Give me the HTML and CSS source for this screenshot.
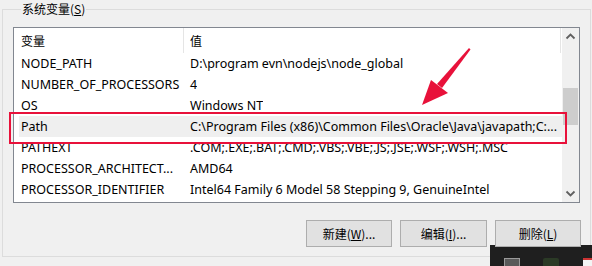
FILE: index.html
```html
<!DOCTYPE html>
<html>
<head>
<meta charset="utf-8">
<link rel="stylesheet" href="styles.css">
</head>
<body>
<fieldset class="group">
  <legend class="legend">系统变量(<u>S</u>)</legend>
  <div class="list">
    <div class="table">
      <div class="head">
        <div class="c1">变量</div>
        <div class="c2">值</div>
      </div>
      <div class="row"><div class="c1">NODE_PATH</div><div class="c2">D:\program evn\nodejs\node_global</div></div>
      <div class="row"><div class="c1">NUMBER_OF_PROCESSORS</div><div class="c2">4</div></div>
      <div class="row"><div class="c1">OS</div><div class="c2">Windows NT</div></div>
      <div class="row sel"><div class="c1">Path</div><div class="c2">C:\Program Files (x86)\Common Files\Oracle\Java\javapath;C:...</div></div>
      <div class="row"><div class="c1">PATHEXT</div><div class="c2">.COM;.EXE;.BAT;.CMD;.VBS;.VBE;.JS;.JSE;.WSF;.WSH;.MSC</div></div>
      <div class="row"><div class="c1">PROCESSOR_ARCHITECT...</div><div class="c2">AMD64</div></div>
      <div class="row"><div class="c1">PROCESSOR_IDENTIFIER</div><div class="c2">Intel64 Family 6 Model 58 Stepping 9, GenuineIntel</div></div>
    </div>
    <div class="scroll">
      <svg class="arr" width="17" height="17" viewBox="0 0 17 17"><path d="M4.5 10.5 L8.5 6.5 L12.5 10.5" fill="none" stroke="#606060" stroke-width="1.8"/></svg>
      <div class="track"><div class="thumb"></div></div>
      <svg class="arr" width="17" height="17" viewBox="0 0 17 17"><path d="M4.5 6.5 L8.5 10.5 L12.5 6.5" fill="none" stroke="#606060" stroke-width="1.8"/></svg>
    </div>
    <div class="mark"></div>
  </div>
  <div class="buttons">
    <button class="btn">新建(<u>W</u>)...</button>
    <button class="btn b2">编辑(<u>I</u>)...</button>
    <button class="btn">删除(<u>L</u>)</button>
  </div>
</fieldset>
<svg class="arrow" width="70" height="70" viewBox="0 0 70 70">
  <path d="M54 4 L55.5 5.5 L27 44 L22 40 Z" fill="#e8113a"/>
  <path d="M7 61 L16 36 L33 49 Z" fill="#e8113a"/>
</svg>
<div class="taskbar">
  <div class="ti t1"></div>
  <div class="ti t2"></div>
  <div class="ti t3"></div>
</div>
</body>
</html>
```
FILE: styles.css
```css
html, body {
  margin: 0;
  padding: 0;
}
body {
  width: 592px;
  height: 266px;
  overflow: hidden;
  background: #f0f0f0;
  font-family: "Noto Sans", "Noto Sans CJK SC", sans-serif;
  font-size: 12.5px;
  color: #000;
  position: relative;
}
.group {
  margin: 0 0 0 2px;
  width: 568px;
  height: 246px;
  border: 1px solid #dcdcdc;
  padding: 9px 9px 0 10px;
}
.legend {
  padding: 0 1px;
  margin-left: 8px;
  line-height: 18px;
  height: 18px;
  font-size: 12px;
  font-family: "Noto Sans CJK SC", sans-serif;
}
u { text-decoration: underline; text-underline-offset: 1px; }
.list {
  position: relative;
  display: flex;
  width: 565px;
  height: 174px;
  border: 1px solid #828790;
  background: #fff;
}
.table {
  flex: 1;
  display: flex;
  flex-direction: column;
}
.head {
  display: flex;
  height: 25px;
  align-items: center;
  border-right: 1px solid #e5e5e5;
  margin-right: 1px;
}
.head .c1 { border-right: 1px solid #e5e5e5; height: 25px; line-height: 25px; font-size: 12px; font-family: "Noto Sans CJK SC", sans-serif; }
.head .c2 { font-size: 12px; font-family: "Noto Sans CJK SC", sans-serif; }
.row {
  display: flex;
  height: 21px;
  line-height: 21px;
  white-space: nowrap;
}
.c1 {
  width: 162px;
  padding-left: 7px;
  flex: none;
}
.c2 {
  padding-left: 6px;
  white-space: nowrap;
  overflow: hidden;
}
.row .c2 { padding-left: 7px; }
.sel {
  background: #efefef;
  margin-left: 5px;
}
.sel .c1 { padding-left: 2px; }
.scroll {
  width: 17px;
  flex: none;
  background: #f0f0f0;
  display: flex;
  flex-direction: column;
}
.arr { display: block; flex: none; }
.track { flex: 1; padding: 43px 1px 0 1px; }
.thumb { height: 37px; background: #cdcdcd; }
.mark {
  position: absolute;
  left: -5px;
  top: 84px;
  width: 554px;
  height: 28px;
  border: 2px solid #e8113a;
}
.buttons {
  display: flex;
  justify-content: flex-end;
  gap: 8px;
  margin-top: 17px;
  position: relative;
  z-index: 2;
}
.btn {
  width: 86px;
  height: 27px;
  background: #e1e1e1;
  border: 1px solid #adadad;
  font-family: "Noto Sans CJK SC", sans-serif;
  font-size: 12px;
  padding: 0;
  color: #000;
}
.b2 { width: 87px; }
.arrow {
  position: absolute;
  left: 415px;
  top: 44px;
}
.taskbar {
  position: absolute;
  left: 490px;
  top: 245px;
  width: 102px;
  height: 21px;
  background: #1f1f1f;
  display: flex;
  align-items: flex-end;
}
.ti { height: 8px; flex: none; }
.t1 { width: 14px; margin-left: 14px; border: 1px solid #9a9a9a; border-bottom: none; background: #5a5a5a; height: 7px; }
.t2 { width: 16px; margin-left: 23px; background: #2b3a26; border-radius: 2px 2px 0 0; }
.t3 { width: 9px; margin-left: 24px; background: #f4f4f4; border-top: 2px solid #c33; height: 6px; }
```
